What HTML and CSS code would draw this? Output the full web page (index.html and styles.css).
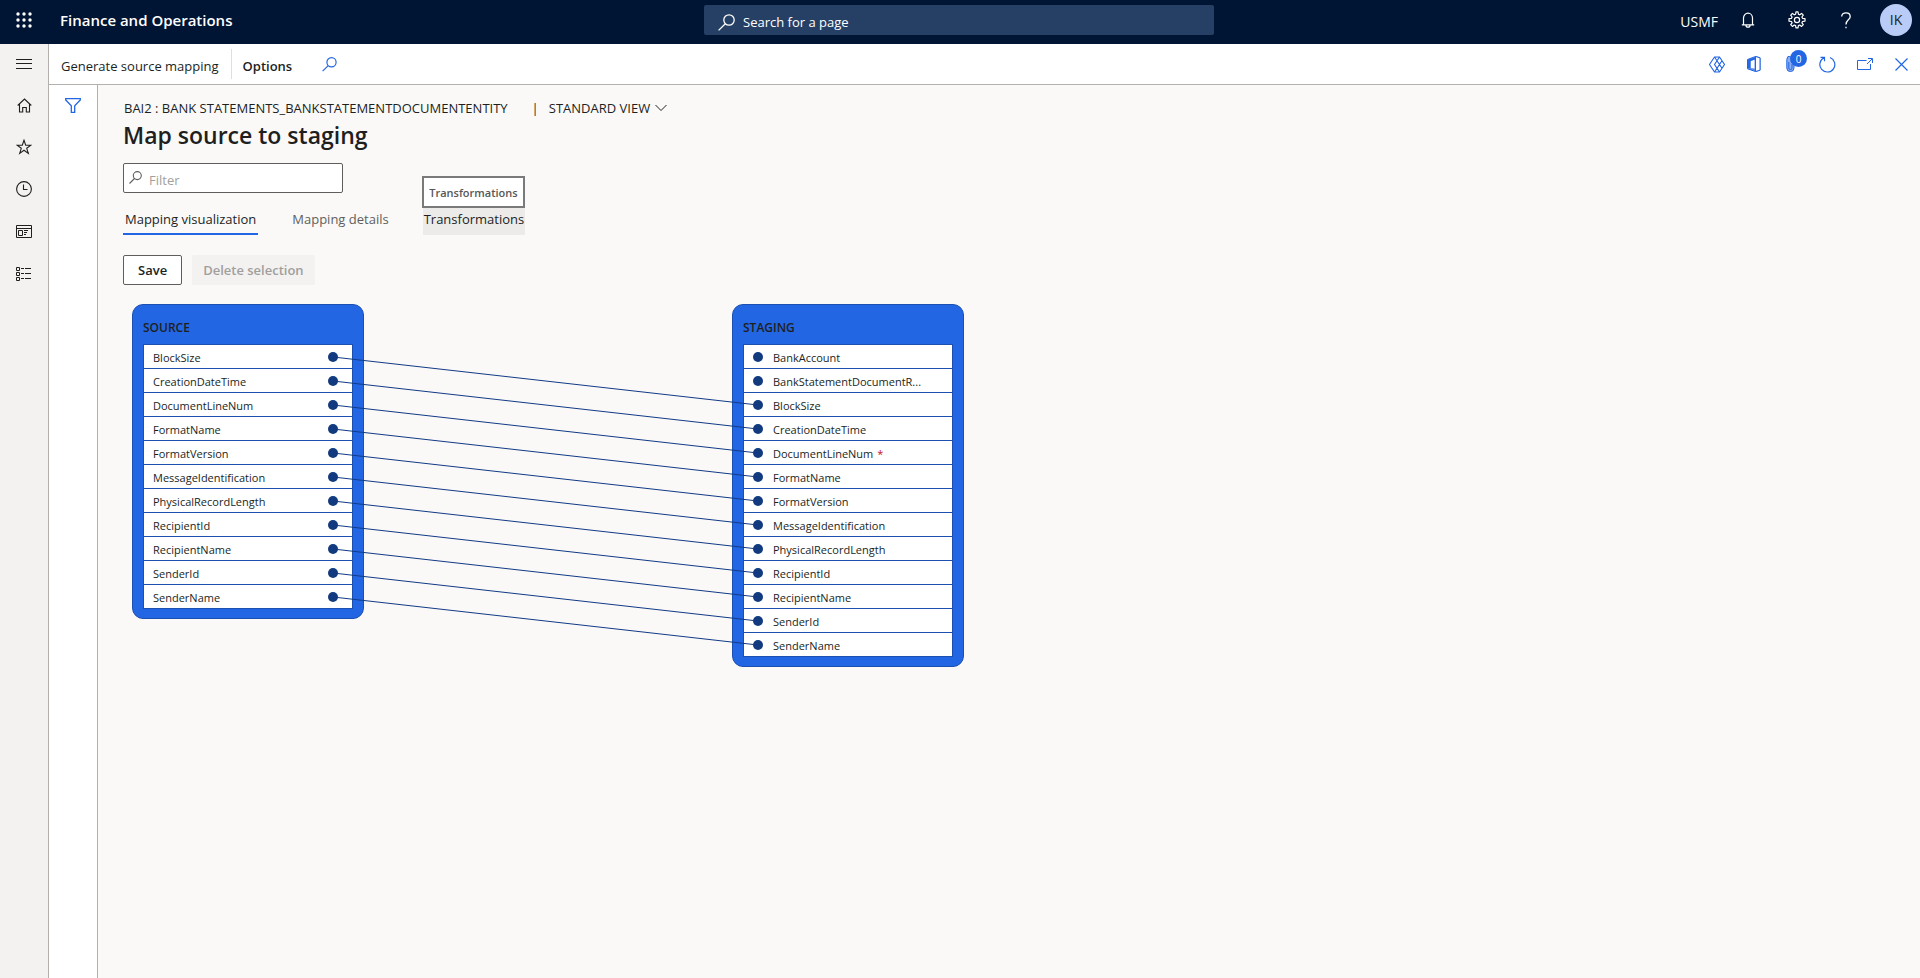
FILE: index.html
```html
<!DOCTYPE html>
<html lang="en">
<head>
<meta charset="utf-8">
<title>Finance and Operations</title>
<link rel="stylesheet" href="styles.css">
</head>
<body class="app">
<header class="topbar">
  <div class="topbar-start">
    <button class="icon-btn waffle" aria-label="App launcher"><svg width="16" height="16" viewBox="0 0 16 16" fill="currentColor"><circle cx="2" cy="2" r="1.7"/><circle cx="8" cy="2" r="1.7"/><circle cx="14" cy="2" r="1.7"/><circle cx="2" cy="8" r="1.7"/><circle cx="8" cy="8" r="1.7"/><circle cx="14" cy="8" r="1.7"/><circle cx="2" cy="14" r="1.7"/><circle cx="8" cy="14" r="1.7"/><circle cx="14" cy="14" r="1.7"/></svg></button>
    <span class="brand">Finance and Operations</span>
  </div>
  <label class="search">
    <svg width="17" height="17" viewBox="0 0 17 17" fill="none" stroke="currentColor" stroke-width="1.3"><circle cx="11" cy="6" r="5.2"/><path d="M7.3 9.7L.6 16.4"/></svg>
    <input type="text" placeholder="Search for a page" aria-label="Search for a page">
  </label>
  <div class="topbar-end">
    <span class="company">USMF</span>
    <button class="icon-btn top-icon" aria-label="Notifications"><svg width="14" height="16" viewBox="0 0 14 16" fill="none" stroke="currentColor" stroke-width="1.2"><path d="M2.5 12.5V6a4.5 4.9 0 0 1 9 0v6.5M.8 12.9h12.4M5 13.2a2 2 0 0 0 4 0"/></svg></button>
    <button class="icon-btn top-icon" aria-label="Settings"><svg width="18" height="18" viewBox="0 0 18 18" fill="none" stroke="currentColor" stroke-width="1.2" stroke-linejoin="round"><path d="M7.6 3.2L8 .9h2l.4 2.3 1.3.6 1.9-1.4 1.7 1.7-1.4 1.9.6 1.3 2.5.4v2.4l-2.5.4-.6 1.3 1.4 1.9-1.7 1.7-1.9-1.4-1.3.6-.4 2.3H8l-.4-2.3-1.3-.6-1.9 1.4-1.7-1.7 1.4-1.9-.6-1.3L1 10.100V7.700l2.500-.4.600-1.300-1.400-1.900 1.700-1.700 1.900 1.400z"/><circle cx="9" cy="9" r="2.600"/></svg></button>
    <button class="icon-btn top-icon" aria-label="Help"><svg width="10" height="17" viewBox="0 0 10 17" fill="none" stroke="currentColor" stroke-width="1.3"><path d="M.7 4.500C.7 2.300 2.500.8 5 .8s4.200 1.500 4.200 3.700C9.200 8 5 7.800 5 12.500M5 14.800v1.500"/></svg></button>
    <button class="avatar" aria-label="Account">IK</button>
  </div>
</header>
<div class="body">
  <nav class="rail" aria-label="Navigation">
    <button class="icon-btn rail-item rail-toggle" aria-label="Expand navigation"><svg width="16" height="10" viewBox="0 0 16 10" stroke="currentColor"><path d="M0 .5h16M0 4.500h16M0 9.500h16"/></svg></button>
    <button class="icon-btn rail-item" aria-label="Home"><svg width="15" height="15" viewBox="0 0 15 15" fill="none" stroke="currentColor" stroke-width="1.1"><path d="M.7 7.500L7.500 1l6.800 6.500M2.500 6v8h3.200V9.500h3.600V14h3.200V6"/></svg></button>
    <button class="icon-btn rail-item" aria-label="Favorites"><svg width="16" height="16" viewBox="0 0 16 16" fill="none" stroke="currentColor" stroke-width="1.1"><path d="M8 1.200l1.700 5h5.200l-4.200 3.100 1.600 5.100L8 11.200l-4.300 3.200 1.600-5.100-4.200-3.100h5.200z"/></svg></button>
    <button class="icon-btn rail-item" aria-label="Recent"><svg width="16" height="16" viewBox="0 0 16 16" fill="none" stroke="currentColor" stroke-width="1.100"><circle cx="8" cy="8" r="7.400"/><path d="M7.500 3.500v5h4"/></svg></button>
    <button class="icon-btn rail-item" aria-label="Workspaces"><svg width="16" height="13" viewBox="0 0 16 13" fill="none" stroke="currentColor"><path d="M.5.500h15v12H.5zM.5 3.500h15M2.500 5.500h4v5h-4zM8 5.500h4M8 7.500h3M8 9.500h2"/></svg></button>
    <button class="icon-btn rail-item" aria-label="Modules"><svg width="16" height="15" viewBox="0 0 16 15" fill="none" stroke="currentColor"><path d="M.5 1.500h3v3h-3zM.5 6.500h3v3h-3zM.5 11.500h3v3h-3zM5 2.500h3M9 2.500h6M5 7.500h3M9 7.500h6M5 12.500h3M9 12.500h6"/></svg></button>
  </nav>
  <div class="workspace">
    <div class="actionbar">
      <button class="action">Generate source mapping</button>
      <button class="action action-strong">Options</button>
      <button class="icon-btn find" aria-label="Search actions"><svg width="15" height="15" viewBox="0 0 15 15" fill="none" stroke="currentColor" stroke-width="1.200"><circle cx="9.500" cy="5.300" r="4.600"/><path d="M6.200 8.600L.6 14.200"/></svg></button>
      <div class="page-tools">
        <button class="icon-btn tool" aria-label="Power Apps"><svg width="16" height="17" viewBox="0 0 16 17" fill="none" stroke="currentColor" stroke-width="1.100"><path d="M5.500 1h5L15.500 8.500 10.500 16h-5L.5 8.500zM5.500 1L13 12.200M5.500 16L13 4.800M10.500 1L5.500 8.500l5 7.500"/></svg></button>
        <button class="icon-btn tool" aria-label="Open in Office"><svg width="14" height="16" viewBox="0 0 14 16"><path d="M.5 3.500L8.500.500l4.500 1.300v12.400l-4.500 1.300-8-2.700z" fill="#5f8fec" stroke="currentColor"/><path d="M8.500.500l4.500 1.300v12.400l-4.500 1.300z" fill="#fff" stroke="currentColor"/><path d="M4 5l3.500-1.200v8.700L4 12z" fill="#fff"/><path d="M2 12V4.500L8 2.500" fill="none" stroke="currentColor" stroke-width="1.800"/></svg></button>
        <button class="icon-btn tool attach" aria-label="Attachments"><svg width="9" height="16" viewBox="0 0 9 16"><path d="M.8 12V3.500a3.600 3.600 0 0 1 7.200 0V12a3.600 3.600 0 0 1-7.200 0z" fill="#8aaef2" stroke="currentColor"/><path d="M2.800 6v6a1.600 1.600 0 0 0 3.200 0V8" fill="none" stroke="currentColor"/></svg><span class="badge">0</span></button>
        <button class="icon-btn tool" aria-label="Refresh"><svg width="17" height="17" viewBox="0 0 17 17" fill="none" stroke="currentColor" stroke-width="1.200"><path d="M11 1.500A7.500 7.500 0 1 1 5 1.800M1.500 1.300h4v4"/></svg></button>
        <button class="icon-btn tool" aria-label="Open in new window"><svg width="16" height="12" viewBox="0 0 16 12" fill="none" stroke="currentColor"><path d="M9.500 2.500h-9v9h13V6M10 6l5-5M11 .5h4.500V5"/></svg></button>
        <button class="icon-btn tool" aria-label="Close"><svg width="13" height="13" viewBox="0 0 13 13" stroke="currentColor" stroke-width="1.200"><path d="M.5.500l12 12M12.500.500l-12 12"/></svg></button>
      </div>
    </div>
    <div class="content">
      <aside class="filter-pane"><button class="icon-btn" aria-label="Show filters"><svg width="16" height="15" viewBox="0 0 16 15" fill="none" stroke="currentColor" stroke-width="1.300"><path d="M.7.700h14.600v1.200L9.700 7.800v6.500H6.300V7.800L.7 1.900z"/></svg></button></aside>
      <main class="page">
        <div class="crumbs"><span>BAI2 : BANK STATEMENTS_BANKSTATEMENTDOCUMENTENTITY</span><span class="crumb-bar">|</span><button class="view-btn">STANDARD VIEW<svg width="12" height="8" viewBox="0 0 12 8" fill="none" stroke="currentColor"><path d="M.5 1L6 6.500 11.500 1"/></svg></button></div>
        <h1 class="title">Map source to staging</h1>
        <label class="filter"><svg width="13" height="13" viewBox="0 0 13 13" fill="none" stroke="currentColor" stroke-width="1.100"><circle cx="8.300" cy="4.600" r="4"/><path d="M5.500 7.500L.5 12.500"/></svg><input type="text" placeholder="Filter" aria-label="Filter"></label>
        <div class="tabs" role="tablist">
          <button class="tab tab-active" role="tab" aria-selected="true">Mapping visualization</button>
          <button class="tab" role="tab">Mapping details</button>
          <div class="tab-wrap"><button class="tab tab-hover" role="tab">Transformations</button><span class="tooltip" role="tooltip">Transformations</span></div>
        </div>
        <div class="commands">
          <button class="btn">Save</button>
          <button class="btn btn-disabled" disabled>Delete selection</button>
        </div>
        <div class="diagram">
          <section class="node">
            <h2 class="node-title">SOURCE</h2>
            <ul class="fields fields-out">
              <li>BlockSize</li><li>CreationDateTime</li><li>DocumentLineNum</li><li>FormatName</li><li>FormatVersion</li><li>MessageIdentification</li><li>PhysicalRecordLength</li><li>RecipientId</li><li>RecipientName</li><li>SenderId</li><li>SenderName</li>
            </ul>
          </section>
          <section class="node">
            <h2 class="node-title">STAGING</h2>
            <ul class="fields">
              <li>BankAccount</li><li>BankStatementDocumentR...</li><li>BlockSize</li><li>CreationDateTime</li><li>DocumentLineNum<span class="required">*</span></li><li>FormatName</li><li>FormatVersion</li><li>MessageIdentification</li><li>PhysicalRecordLength</li><li>RecipientId</li><li>RecipientName</li><li>SenderId</li><li>SenderName</li>
            </ul>
          </section>
          <svg class="links" width="832" height="363" viewBox="0 0 832 363" fill="none" stroke="#123a85"><path d="M201 53L626 101M201 77L626 125M201 101L626 149M201 125L626 173M201 149L626 197M201 173L626 221M201 197L626 245M201 221L626 269M201 245L626 293M201 269L626 317M201 293L626 341"/></svg>
        </div>
      </main>
    </div>
  </div>
</div>
</body>
</html>
```
FILE: styles.css
```css
* { box-sizing: border-box; }
.app {
  margin: 0;
  min-height: 100vh;
  display: flex;
  flex-direction: column;
  font: 13px/20px "Open Sans", "Noto Sans", sans-serif;
  color: #201f1e;
  background: #faf9f8;
}
button, input { font: inherit; color: inherit; }
button { background: none; border: 0; padding: 0; white-space: nowrap; }
svg { display: block; flex: none; }
.icon-btn { display: flex; align-items: center; justify-content: center; }

.topbar {
  display: grid;
  grid-template-columns: 1fr 510px 1fr;
  height: 44px;
  padding-right: 2px;
  background: #001433;
  color: #fff;
}
.topbar-start, .topbar-end { display: flex; align-items: center; height: 40px; }
.waffle { width: 48px; height: 40px; }
.brand { padding-left: 12px; font-size: 15px; font-weight: 600; }
.search {
  display: flex;
  align-items: center;
  gap: 8px;
  height: 30px;
  margin-top: 5px;
  padding: 4px 14px 0;
  background: #264065;
  border-radius: 2px;
}
.search input { flex: 1; min-width: 0; padding: 0; border: 0; background: none; }
.search input::placeholder { color: #fff; opacity: 1; }
.topbar-end { justify-content: flex-end; padding-right: 6px; }
.company { padding: 3px 5px 0 0; font-size: 14px; }
.top-icon { width: 49px; height: 40px; }
.avatar {
  width: 32px;
  height: 32px;
  margin-left: 10px;
  border-radius: 50%;
  background: #b9ccf7;
  color: #201f1e;
  font-size: 14px;
}

.body { flex: 1; display: flex; }
.rail {
  width: 49px;
  flex: none;
  background: #f3f2f1;
  border-right: 1px solid #b3b0ad;
}
.rail-item { width: 48px; height: 42px; }
.rail-toggle { height: 40px; }
.workspace { flex: 1; min-width: 0; display: flex; flex-direction: column; }
.actionbar {
  display: flex;
  align-items: center;
  height: 41px;
  background: #fff;
  border-bottom: 1px solid #b3b0ad;
}
.action { height: 30px; padding: 4px 12px 0; border-right: 1px solid #e1dfdd; }
.action-strong { padding-left: 11px; border: 0; font-weight: 600; }
.find { margin-left: 18px; color: #2266e3; }
.page-tools { display: flex; margin-left: auto; color: #2266e3; }
.tool { position: relative; width: 37px; height: 40px; }
.badge {
  position: absolute;
  left: 18px;
  top: 6px;
  width: 17px;
  height: 17px;
  border-radius: 50%;
  background: #2266e3;
  color: #fff;
  font-size: 10px;
  line-height: 18px;
  text-align: center;
}

.content { flex: 1; display: flex; }
.filter-pane {
  width: 49px;
  flex: none;
  display: flex;
  justify-content: center;
  align-items: flex-start;
  padding-top: 13px;
  background: #fff;
  border-right: 1px solid #b3b0ad;
  color: #2266e3;
}
.page { flex: 1; min-width: 0; padding: 13px 25px; }
.crumbs { display: flex; align-items: center; padding-left: 1px; white-space: nowrap; }
.crumb-bar { padding: 0 10px 0 24px; }
.view-btn { display: flex; align-items: center; gap: 5px; }
.title { margin: 0; font-size: 23px; line-height: 34px; font-weight: 600; }
.filter {
  display: flex;
  gap: 7px;
  width: 220px;
  height: 30px;
  margin-top: 11px;
  padding: 7px 5px 0;
  background: #fff;
  border: 1px solid #605e5c;
  border-radius: 2px;
  color: #605e5c;
}
.filter input { flex: 1; min-width: 0; height: 18px; padding: 0; border: 0; background: none; }
.filter input::placeholder { color: #a19f9d; opacity: 1; }
.tabs { display: flex; gap: 32px; margin-top: 15px; }
.tab { height: 27px; padding: 0 2px 4px; color: #605e5c; border-bottom: 2px solid transparent; }
.tab-active { color: #201f1e; border-color: #2266e3; }
.tab-wrap { position: relative; }
.tab-hover { padding: 0 1px 4px; color: #201f1e; background: #edebe9; }
.tooltip {
  position: absolute;
  left: -1px;
  right: 0;
  bottom: 27px;
  height: 32px;
  border: 2px solid #7a7a7a;
  background: #fff;
  color: #575757;
  font-size: 11px;
  line-height: 30px;
  font-weight: 600;
  text-align: center;
}
.commands { display: flex; gap: 10px; margin-top: 20px; }
.btn {
  height: 30px;
  padding: 0 14px;
  background: #fff;
  border: 1px solid #605e5c;
  border-radius: 2px;
  font-weight: 600;
}
.btn-disabled { padding: 0 10px; background: #f3f2f1; border-color: #f3f2f1; color: #a19f9d; }

.diagram {
  position: relative;
  display: flex;
  align-items: flex-start;
  gap: 368px;
  margin: 19px 0 0 9px;
}
.node {
  width: 232px;
  flex: none;
  padding: 0 10px 9px;
  background: #2266e3;
  border: 1px solid #1c50b0;
  border-radius: 11px;
}
.node-title { margin: 0; padding-top: 14px; height: 39px; font-size: 12px; line-height: 18px; font-weight: 600; }
.fields {
  margin: 0;
  padding: 0;
  list-style: none;
  background: #fff;
  border: 1px solid #1c50b0;
  font-size: 11px;
  line-height: 22px;
}
.fields li { display: flex; height: 24px; padding: 2px 9px 0; border-bottom: 1px solid #1c50b0; }
.fields li:last-child { height: 23px; border: 0; }
.fields li::before, .fields-out li::after {
  content: "";
  width: 10px;
  height: 10px;
  flex: none;
  margin: 5px 10px 0 0;
  border-radius: 50%;
  background: #123a7f;
}
.fields-out li { justify-content: space-between; }
.fields-out li::before { display: none; }
.fields-out li::after { margin-right: 5px; }
.required { margin-left: 4px; color: #c50f1f; }
.links { position: absolute; left: 0; top: 0; pointer-events: none; }
```
